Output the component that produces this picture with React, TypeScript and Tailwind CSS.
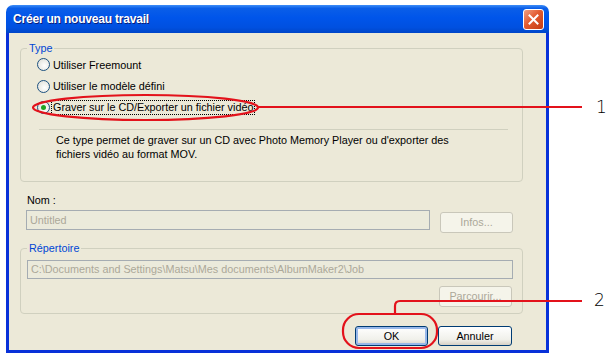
const tahoma = { fontFamily: 'Tahoma, "Liberation Sans", Arial, sans-serif' }

function Radio({ checked, label }: { checked?: boolean; label: string }) {
  return (
    <div className="flex h-[21.5px] items-center">
      <span className="relative flex h-[13px] w-[13px] shrink-0 items-center justify-center rounded-full border border-[#1c5180] bg-[radial-gradient(circle_at_60%_60%,#ffffff,#dcdcd3)]">
        {checked && <span className="h-[5px] w-[5px] rounded-full bg-[#21a121]" />}
      </span>
      <span className={'ml-[1px] px-[1px] ' + (checked ? 'border border-dotted border-black leading-[13px]' : 'border border-transparent')}>{label}</span>
    </div>
  )
}

function DisabledButton({ label, className = '' }: { label: string; className?: string }) {
  return (
    <div className={'flex h-[21px] w-[73px] items-center justify-center rounded-[3px] border border-[#c9c7ba] bg-[#f5f4ea] text-[#aca899] ' + className}>
      {label}
    </div>
  )
}

function GroupBox({ label, className = '', children }: { label: string; className?: string; children: React.ReactNode }) {
  return (
    <div className={'relative rounded-[4px] border border-[#d0d0bf] ' + className}>
      <span className="absolute -top-[8px] left-[6px] bg-[#ece9d8] px-[2px] leading-[14px] text-[#0046d5]">{label}</span>
      {children}
    </div>
  )
}

export default function App() {
  return (
    <div className="relative h-[362px] w-[612px] overflow-hidden bg-white text-[10.8px] text-black" style={tahoma}>
      <div className="ml-[6px] mt-[5px] flex h-[348px] w-[543px] flex-col">
        {/* title bar */}
        <div className="flex h-[28px] items-center justify-between rounded-t-[7px] bg-[linear-gradient(#3d8df7_0%,#0a5ee8_12%,#0055ea_45%,#0050e0_80%,#0046c8_100%)] pl-[7px] pr-[5px]">
          <span className="text-[12px] font-bold tracking-[-0.2px] text-white [text-shadow:1px_1px_0_#0a1e7a]">Créer un nouveau travail</span>
          <span className="flex h-[21px] w-[21px] items-center justify-center rounded-[3px] border border-white bg-[linear-gradient(135deg,#f0a083,#e35b30_45%,#c23c14)]">
            <svg width="11" height="11" viewBox="0 0 11 11">
              <path d="M1.5 1.5 L9.5 9.5 M9.5 1.5 L1.5 9.5" stroke="white" strokeWidth="2" strokeLinecap="square" />
            </svg>
          </span>
        </div>
        {/* body */}
        <div className="flex flex-1 flex-col border-x-[3px] border-b-[3px] border-[#0831d9] bg-[#ece9d8] px-[11px] pt-[15px]">
          <GroupBox label="Type" className="h-[134px] w-[503px]">
            <div className="pl-[16px] pt-[5px]">
              <Radio label="Utiliser Freemount" />
              <Radio label="Utiliser le modèle défini" />
              <Radio checked label="Graver sur le CD/Exporter un fichier vidéo" />
            </div>
            <div className="ml-[18px] mt-[10px] h-[1px] w-[469px] bg-[#d0d0bf]" />
            <p className="ml-[35px] mt-[3px] leading-[14px]">
              Ce type permet de graver sur un CD avec Photo Memory Player ou d'exporter des
              <br />
              fichiers vidéo au format MOV.
            </p>
          </GroupBox>

          <div className="ml-[7px] mt-[11px] leading-[14px]">Nom :</div>
          <div className="ml-[6px] mt-[3px] flex items-start gap-[10px]">
            <div className="flex h-[20px] w-[404px] items-center border border-[#a5acb2] bg-[#ebeadb] pl-[3px] text-[#aca899]">Untitled</div>
            <DisabledButton label="Infos..." className="mt-[2px]" />
          </div>

          <GroupBox label="Répertoire" className="mt-[15px] h-[66px] w-[503px]">
            <div className="ml-[6px] mt-[11px] flex h-[19px] w-[486px] items-center border border-[#a5acb2] bg-[#ebeadb] pl-[3px] text-[#aca899]">
              C:\Documents and Settings\Matsu\Mes documents\AlbumMaker2\Job
            </div>
            <div className="mt-[7px] flex justify-end pr-[10px]">
              <DisabledButton label="Parcourir..." className="h-[20px]" />
            </div>
          </GroupBox>

          <div className="mt-[12px] flex justify-end gap-[10px] pr-[23px]">
            <div className="flex h-[20px] w-[73px] items-center justify-center rounded-[3px] border border-[#003c74] bg-[linear-gradient(#ffffff,#f0f0ea_70%,#d6d0c5)] shadow-[inset_0_0_0_2px_#98b8ea]">
              OK
            </div>
            <div className="flex h-[20px] w-[74px] items-center justify-center rounded-[3px] border border-[#003c74] bg-[linear-gradient(#ffffff,#f0f0ea_70%,#d6d0c5)]">
              Annuler
            </div>
          </div>
        </div>
      </div>

      {/* annotation callouts */}
      <svg className="pointer-events-none absolute left-0 top-0" width="612" height="362">
        <ellipse cx="145.5" cy="107.5" rx="112.5" ry="12.5" fill="none" stroke="#e3121b" strokeWidth="2.2" />
        <line x1="258" y1="107" x2="582" y2="107" stroke="#e3121b" strokeWidth="2.2" />
        <rect x="343" y="314" width="94" height="34" rx="16" fill="none" stroke="#e3121b" strokeWidth="2.2" />
        <path d="M395 314 V306 Q395 301 400 301 H582" fill="none" stroke="#e3121b" strokeWidth="2.2" />
      </svg>
      <span className="absolute left-[596px] top-[97px] text-[17px] leading-[20px]" style={{ fontFamily: '"DejaVu Sans", sans-serif', fontWeight: 300 }}>1</span>
      <span className="absolute left-[594px] top-[290px] text-[17px] leading-[20px]" style={{ fontFamily: '"DejaVu Sans", sans-serif', fontWeight: 300 }}>2</span>
    </div>
  )
}
